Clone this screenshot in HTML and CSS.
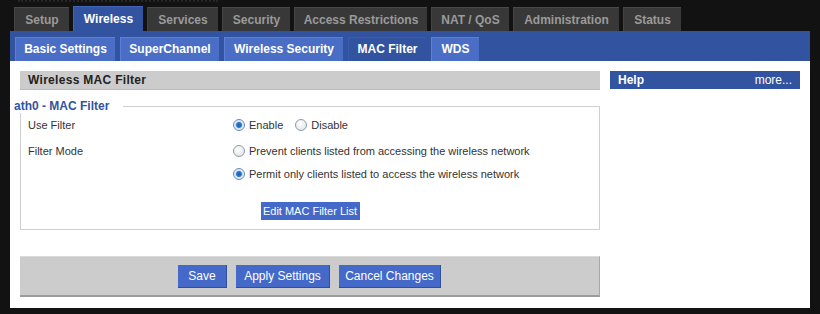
FILE: index.html
```html
<!DOCTYPE html>
<html lang="en">
<head>
    <meta charset="UTF-8">
    <title>Wireless - MAC Filter</title>
    <link rel="stylesheet" href="styles.css">
</head>
<body>
    <div class="logo-strip"><span class="logo-edge"></span></div>

    <div class="page">
        <ul class="main-tabs">
            <li class="tab tab-setup">Setup</li>
            <li class="tab tab-wireless current">Wireless</li>
            <li class="tab tab-services">Services</li>
            <li class="tab tab-security">Security</li>
            <li class="tab tab-access">Access Restrictions</li>
            <li class="tab tab-nat">NAT / QoS</li>
            <li class="tab tab-admin">Administration</li>
            <li class="tab tab-status">Status</li>
        </ul>

        <ul class="sub-tabs">
            <li class="subtab st-basic">Basic Settings</li>
            <li class="subtab st-super">SuperChannel</li>
            <li class="subtab st-security">Wireless Security</li>
            <li class="subtab st-mac current">MAC Filter</li>
            <li class="subtab st-wds">WDS</li>
        </ul>

        <div class="content">
            <div class="main">
                <h2 class="section-title">Wireless MAC Filter</h2>

                <fieldset class="box">
                    <legend>ath0 - MAC Filter</legend>
                    <div class="setting">
                        <div class="label">Use Filter</div>
                        <div class="options">
                            <label class="radio"><span class="dot checked"></span>Enable</label>
                            <label class="radio"><span class="dot"></span>Disable</label>
                        </div>
                    </div>
                    <div class="setting">
                        <div class="label">Filter Mode</div>
                        <div class="options stacked">
                            <label class="radio"><span class="dot"></span>Prevent clients listed from accessing the wireless network</label>
                            <label class="radio"><span class="dot checked"></span>Permit only clients listed to access the wireless network</label>
                        </div>
                    </div>
                    <div class="center-row">
                        <button type="button" class="btn btn-small">Edit MAC Filter List</button>
                    </div>
                </fieldset>

                <div class="submit-footer">
                    <button type="button" class="btn btn-save">Save</button>
                    <button type="button" class="btn btn-apply">Apply Settings</button>
                    <button type="button" class="btn btn-cancel">Cancel Changes</button>
                </div>
            </div>

            <div class="help">
                <div class="help-head">
                    <span>Help</span>
                    <a href="#" class="more">more...</a>
                </div>
            </div>
        </div>
    </div>
</body>
</html>
```

FILE: styles.css
```css
* {
    box-sizing: border-box;
}

body {
    margin: 0;
    background-color: #121212;
    font-family: "Liberation Sans", Arial, sans-serif;
    font-size: 11px;
    color: #333;
}

ul {
    list-style: none;
    margin: 0;
    padding: 0;
}

/* bottom edge of the logo, cut off by the window */
.logo-strip {
    height: 7px;
    padding: 0 0 0 18px;
}

.logo-edge {
    display: block;
    width: 200px;
    height: 2px;
    border-bottom: 2px dotted #262626;
}

.page {
    padding: 0 10px;
}

/* top level tabs */
.main-tabs {
    display: flex;
    align-items: flex-end;
    gap: 4px;
    height: 24px;
    padding-left: 4px;
}

.tab {
    height: 24px;
    line-height: 24px;
    text-align: center;
    background: #383838;
    border-top: 1px solid #4a4a4a;
    border-left: 1px solid #444;
    color: #9a9a9a;
    font-weight: bold;
    font-size: 12px;
}

.tab.current {
    height: 25px;
    line-height: 25px;
    background: #3253a0;
    border-color: #4265b8;
    color: #fff;
}

.tab-setup { width: 55px; }
.tab-wireless { width: 70px; }
.tab-services { width: 71px; }
.tab-security { width: 68px; }
.tab-access { width: 133px; }
.tab-nat { width: 78px; }
.tab-admin { width: 106px; }
.tab-status { width: 58px; }

/* second level tabs */
.sub-tabs {
    display: flex;
    gap: 5px;
    height: 30px;
    padding: 6px 0 0 5px;
    background: #3253a0;
}

.subtab {
    height: 24px;
    line-height: 23px;
    text-align: center;
    background: #4a6ec6;
    border-top: 1px solid #5c80d6;
    border-left: 1px solid #5c80d6;
    color: #fff;
    font-weight: bold;
    font-size: 12px;
}

.subtab.current {
    background: #3253a0;
    border-color: #3a5cae;
}

.st-basic { width: 100px; }
.st-super { width: 99px; }
.st-security { width: 119px; }
.st-mac { width: 78px; }
.st-wds { width: 48px; }

/* content area */
.content {
    display: flex;
    gap: 10px;
    height: 247px;
    padding: 10px;
    background: #fff;
}

.main {
    width: 580px;
}

.section-title {
    margin: 0;
    height: 19px;
    line-height: 19px;
    padding-left: 8px;
    background: #cccccc;
    border-bottom: 1px solid #b8b8b8;
    color: #222;
    font-size: 12px;
    font-weight: bold;
    letter-spacing: 0.3px;
}

.box {
    margin: 9px 0 0;
    padding: 2px 0 9px 7px;
    border: 1px solid #cfcfcf;
    min-width: 0;
}

.box legend {
    margin-left: -14px;
    padding: 0 14px 0 0;
    color: #3253a0;
    font-weight: bold;
    font-size: 12px;
}

.setting {
    display: flex;
    padding-top: 2px;
}

.setting + .setting {
    padding-top: 10px;
}

.label {
    width: 205px;
    line-height: 16px;
}

.options {
    display: flex;
    gap: 12px;
}

.options.stacked {
    flex-direction: column;
    gap: 7px;
}

.radio {
    display: flex;
    align-items: center;
    gap: 4px;
    line-height: 16px;
}

.dot {
    width: 12px;
    height: 12px;
    border-radius: 50%;
    border: 1px solid #8f9aa8;
    background: radial-gradient(circle at 40% 35%, #fff, #dcdfe4);
}

.dot.checked {
    background: radial-gradient(circle, #1d5fa6 0, #2a7ad0 2.5px, #cfe0f2 3.5px, #fff 6px);
    border-color: #6d8ab0;
}

.center-row {
    display: flex;
    justify-content: center;
    padding: 20px 0 0;
    margin-left: -7px;
}

.btn {
    height: 23px;
    padding: 0;
    border: none;
    border-right: 1px solid #2f4f98;
    border-bottom: 1px solid #2f4f98;
    background: #4469c9;
    color: #fff;
    font-family: inherit;
    font-size: 12px;
}

.btn-save { width: 49px; }
.btn-apply { width: 94px; }
.btn-cancel { width: 102px; }

.btn-small {
    width: 99px;
    height: 18px;
    border: none;
    font-size: 11px;
}

.submit-footer {
    display: flex;
    justify-content: center;
    gap: 9px;
    margin-top: 26px;
    height: 41px;
    padding-top: 8px;
    background: #cccccc;
    border-top: 1px solid #dadada;
    border-bottom: 2px solid #9c9c9c;
    border-right: 1px solid #a8a8a8;
}

.help {
    width: 190px;
}

.help-head {
    display: flex;
    justify-content: space-between;
    height: 18px;
    line-height: 18px;
    padding: 0 8px;
    background: #3253a0;
    color: #fff;
    font-size: 12px;
}

.help-head span {
    font-weight: bold;
}

.more {
    color: #fff;
    text-decoration: none;
}
```
